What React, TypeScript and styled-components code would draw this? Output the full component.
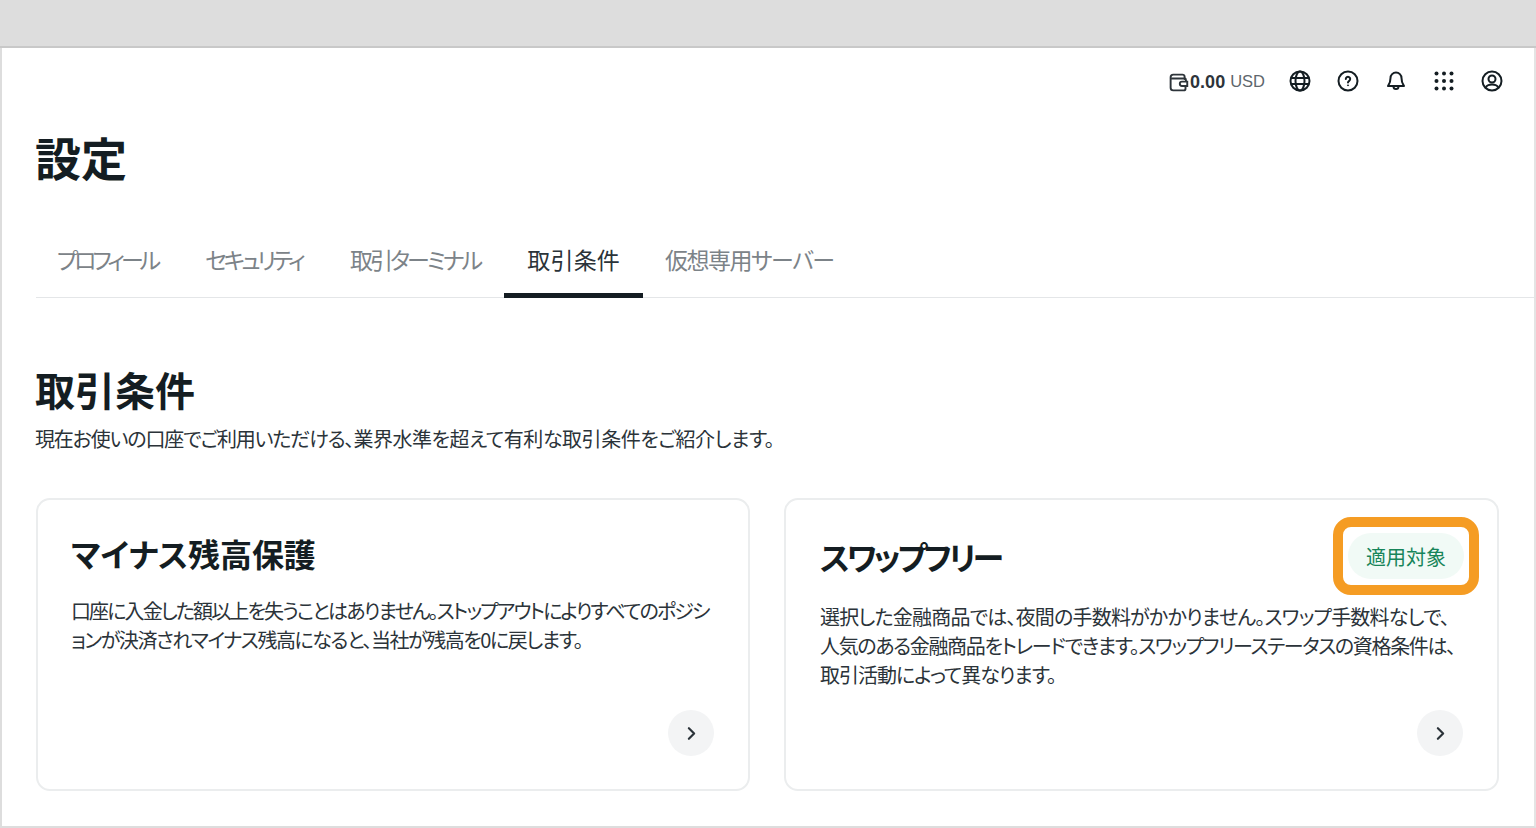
import React from 'react';
import styled, { createGlobalStyle } from 'styled-components';
import { ChevronRight } from 'lucide-react';

const GlobalStyle = createGlobalStyle`
  html, body {
    margin: 0;
    padding: 0;
    background: #fff;
  }
  body {
    font-family: "Noto Sans CJK JP", "Noto Sans", "Liberation Sans", sans-serif;
    color: #141d22;
    font-feature-settings: "palt";
    overflow: hidden;
  }
`;

const Page = styled.div`
  width: 1536px;
  height: 828px;
  box-sizing: border-box;
  display: flex;
  flex-direction: column;
  overflow: hidden;
`;

const BrowserBar = styled.div`
  flex: 0 0 46px;
  background: #dddddd;
  border-bottom: 2px solid #c8c8c8;
`;

const Frame = styled.div`
  flex: 1;
  border-left: 2px solid #dddddd;
  border-right: 2px solid #e4e4e4;
  border-bottom: 2px solid #dddddd;
  padding: 0 0 0 34px;
`;

const TopBar = styled.header`
  height: 66px;
  display: flex;
  align-items: center;
  justify-content: flex-end;
  gap: 24px;
  padding-right: 30px;
`;

const Balance = styled.div`
  display: flex;
  align-items: center;
  margin-right: -1px;
  color: #141d22;
  font-family: "Liberation Sans", sans-serif;
  font-size: 17px;
  position: relative;
  top: 1px;
`;

const Amount = styled.span`
  font-weight: 700;
  color: #2d343a;
  font-size: 18px;
  margin-left: 1px;
`;

const Currency = styled.span`
  margin-left: 5px;
  color: #5e666c;
  font-size: 16.5px;
  position: relative;
  top: -1px;
`;

const IconSlot = styled.span`
  width: 24px;
  height: 24px;
  display: flex;
  align-items: center;
  justify-content: center;
  color: #141d22;
`;

const PageTitle = styled.h1`
  margin: 12px 0 0 -1px;
  font-size: 46px;
  line-height: 60px;
  font-weight: 700;
`;

const TabBar = styled.nav`
  margin-top: 35px;
  display: flex;
  height: 76px;
  border-bottom: 1px solid #e4e6e8;
`;

const Tab = styled.div<{ $active?: boolean; $tracking: number }>`
  display: flex;
  align-items: center;
  height: 77px;
  box-sizing: border-box;
  padding: 3px ${(p) => (p.$active ? '23px' : '24px')} 0;
  font-size: 23px;
  letter-spacing: ${(p) => p.$tracking}px;
  color: ${(p) => (p.$active ? '#2b3339' : '#7c8388')};
  border-bottom: 5px solid ${(p) => (p.$active ? '#141d22' : 'transparent')};
  &:first-child {
    padding-left: 21px;
  }
  &:last-child {
    padding-left: 22px;
  }
`;

const SectionTitle = styled.h2`
  margin: 63px 0 0 -1px;
  font-size: 40px;
  line-height: 56px;
  font-weight: 700;
`;

const SectionText = styled.p`
  margin: 8px 0 0 -1px;
  font-size: 20px;
  line-height: 28px;
  color: #2b3339;
`;

const Run = styled.span<{ $tracking: number }>`
  letter-spacing: ${(p) => p.$tracking}px;
`;

const Cards = styled.div`
  margin-top: 45px;
  display: grid;
  grid-template-columns: 714px 715px;
  gap: 34px;
`;

const Card = styled.article`
  position: relative;
  box-sizing: border-box;
  height: 293px;
  border: 2px solid #ebedee;
  border-radius: 14px;
  padding: 33px 33px 0 34px;
  display: flex;
  flex-direction: column;
  &:first-child {
    padding-left: 33px;
  }
`;

const CardHead = styled.div<{ $tall?: boolean }>`
  display: flex;
  align-items: center;
  height: ${(p) => (p.$tall ? '46px' : '40px')};
`;

const CardTitle = styled.h3<{ $tracking: number }>`
  margin: 0;
  font-size: 32px;
  line-height: 44px;
  font-weight: 700;
  letter-spacing: ${(p) => p.$tracking}px;
`;

const CardText = styled.p`
  margin: 23px 0 0;
  font-size: 20px;
  line-height: 29px;
  color: #2b3339;
  white-space: nowrap;
`;

const Highlight = styled.div`
  position: absolute;
  top: 17px;
  right: 18px;
  box-sizing: border-box;
  width: 146px;
  height: 78px;
  border: 10px solid #f59c23;
  border-radius: 18px;
  display: flex;
  align-items: center;
  justify-content: center;
  background: #fff;
`;

const Badge = styled.span`
  height: 46px;
  width: 116px;
  border-radius: 23px;
  background: #f1faf6;
  color: #17855a;
  font-size: 20px;
  display: flex;
  align-items: center;
  justify-content: center;
  font-feature-settings: normal;
`;

const RoundLink = styled.div`
  position: absolute;
  right: 34px;
  bottom: 33px;
  width: 46px;
  height: 46px;
  border-radius: 50%;
  background: #f3f4f5;
  display: flex;
  align-items: center;
  justify-content: center;
  color: #2b3339;
`;

const WalletIcon = () => (
  <svg width="21" height="21" viewBox="0 0 24 24" fill="none" stroke="#2d343a" strokeWidth="2.2">
    <path d="M19 8V5.500A2.500 2.500 0 0 0 16.500 3H6a3 3 0 0 0-3 3v12a3 3 0 0 0 3 3h12a2 2 0 0 0 2-2v-3" strokeLinecap="round" />
    <path d="M3.500 7.500H19a1.500 1.500 0 0 1 1.500 1.500v2" />
    <path d="M16 11h6v5h-6a2.500 2.500 0 0 1 0-5z" fill="#fff" />
  </svg>
);

const GlobeIcon = () => (
  <svg width="22" height="22" viewBox="0 0 22 22" fill="none" stroke="currentColor" strokeWidth="2">
    <circle cx="11" cy="11" r="9.500" />
    <ellipse cx="11" cy="11" rx="4.500" ry="9.500" />
    <path d="M2 8h18M2 14h18" />
  </svg>
);

const HelpIcon = () => (
  <svg width="22" height="22" viewBox="0 0 22 22" fill="none" stroke="currentColor" strokeWidth="2">
    <circle cx="11" cy="11" r="9.500" />
    <path d="M8.800 9a2.200 2.200 0 1 1 3.400 1.800c-.8.500-1.200.9-1.200 1.700" strokeLinecap="round" />
    <circle cx="11" cy="15.300" r="0.500" fill="currentColor" strokeWidth="1" />
  </svg>
);

const BellIcon = () => (
  <svg width="22" height="22" viewBox="0 0 22 22" fill="none" stroke="currentColor" strokeWidth="2" strokeLinejoin="round">
    <path d="M11 2.500a5.500 5.500 0 0 0-5.500 5.500c0 5-2 7-2.500 8h16c-.5-1-2.500-3-2.500-8A5.500 5.500 0 0 0 11 2.500z" />
    <path d="M8.500 16.500a2.500 2.500 0 0 0 5 0" />
  </svg>
);

const AppsIcon = () => (
  <svg width="20" height="20" viewBox="0 0 20 20" fill="currentColor">
    {[2.5, 10, 17.5].flatMap((y) =>
      [2.5, 10, 17.5].map((x) => <circle key={`${x}-${y}`} cx={x} cy={y} r="2" />)
    )}
  </svg>
);

const UserIcon = () => (
  <svg width="22" height="22" viewBox="0 0 22 22" fill="none" stroke="currentColor" strokeWidth="2">
    <circle cx="11" cy="11" r="9.500" />
    <circle cx="11" cy="9" r="3.500" />
    <path d="M4.800 17.500c1-2.200 3.200-3 6.200-3s5.200.8 6.200 3" />
  </svg>
);

const tabs = [
  { label: 'プロフィール', tracking: -4 },
  { label: 'セキュリティ', tracking: -3.7 },
  { label: '取引ターミナル', tracking: -3 },
  { label: '取引条件', tracking: 0.2, active: true },
  { label: '仮想専用サーバー', tracking: -1.5 },
];

export default function App() {
  return (
    <>
      <GlobalStyle />
      <Page>
        <BrowserBar />
        <Frame>
          <TopBar>
            <Balance>
              <WalletIcon />
              <Amount>0.00</Amount>
              <Currency>USD</Currency>
            </Balance>
            <IconSlot><GlobeIcon /></IconSlot>
            <IconSlot><HelpIcon /></IconSlot>
            <IconSlot><BellIcon /></IconSlot>
            <IconSlot><AppsIcon /></IconSlot>
            <IconSlot><UserIcon /></IconSlot>
          </TopBar>
          <PageTitle>設定</PageTitle>
          <TabBar>
            {tabs.map((t) => (
              <Tab key={t.label} $active={t.active} $tracking={t.tracking}>{t.label}</Tab>
            ))}
          </TabBar>
          <SectionTitle>取引条件</SectionTitle>
          <SectionText>
            <Run $tracking={-1.15}>現在お使いの口座でご利用いただける、</Run>
            <Run $tracking={-0.45}>業界水準を超えて有利な取引条件をご紹介します。</Run>
          </SectionText>
          <Cards>
            <Card>
              <CardHead>
                <CardTitle $tracking={-0.1}>マイナス残高保護</CardTitle>
              </CardHead>
              <CardText>
                <Run $tracking={-1.88}>口座に入金した額以上を失うことはありません。ストップアウトによりすべてのポジシ</Run><br />
                <Run $tracking={-1.44}>ョンが決済されマイナス残高になると、当社が残高を0に戻します。</Run>
              </CardText>
              <RoundLink><ChevronRight size={21} strokeWidth={2.5} /></RoundLink>
            </Card>
            <Card>
              <CardHead $tall>
                <CardTitle $tracking={-3.2}>スワップフリー</CardTitle>
              </CardHead>
              <Highlight><Badge>適用対象</Badge></Highlight>
              <CardText>
                <Run $tracking={-0.8}>選択した金融商品では、夜間の手数料がかかりません。スワップ手数料なしで、</Run><br />
                <Run $tracking={-1.36}>人気のある金融商品をトレードできます。スワップフリーステータスの資格条件は、</Run><br />
                <Run $tracking={-1.03}>取引活動によって異なります。</Run>
              </CardText>
              <RoundLink><ChevronRight size={21} strokeWidth={2.5} /></RoundLink>
            </Card>
          </Cards>
        </Frame>
      </Page>
    </>
  );
}
